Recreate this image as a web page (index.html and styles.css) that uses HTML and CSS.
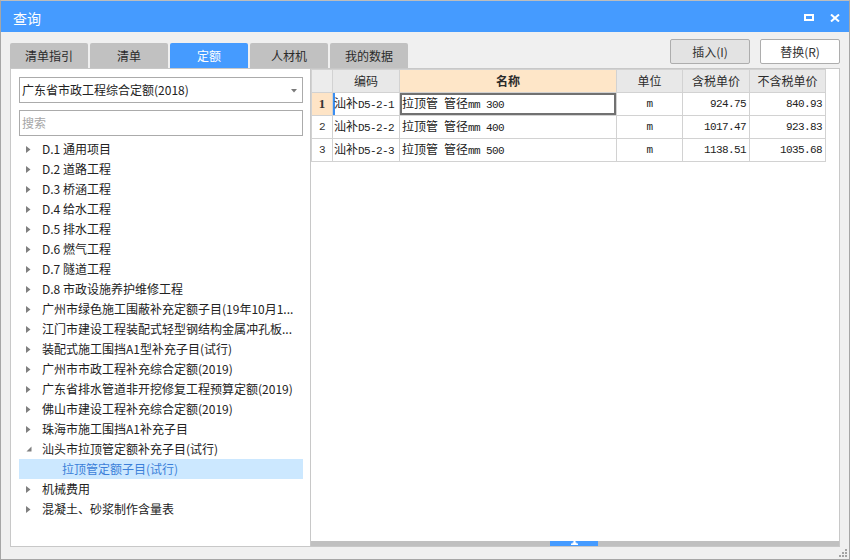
FILE: index.html
```html
<!DOCTYPE html>
<html lang="zh-CN">
<head>
<meta charset="utf-8">
<title>查询</title>
<link rel="stylesheet" href="styles.css">
</head>
<body>
<div class="window">
  <div class="titlebar">
    <span class="title">查询</span>
    <div class="wctl">
      <span class="maxbox"></span>
      <svg class="close" width="10" height="8" viewBox="0 0 10 8"><path d="M1 0.5 L9 7.5 M9 0.5 L1 7.5" stroke="#fff" stroke-width="2" fill="none"/></svg>
    </div>
  </div>
  <div class="body">
    <div class="toprow">
      <div class="tabs">
        <div class="tab">清单指引</div>
        <div class="tab">清单</div>
        <div class="tab active">定额</div>
        <div class="tab">人材机</div>
        <div class="tab">我的数据</div>
      </div>
      <div class="buttons">
        <div class="btn gray">插入(I)</div>
        <div class="btn">替换(R)</div>
      </div>
    </div>
    <div class="main">
      <div class="left">
        <div class="select"><span class="seltext">广东省市政工程综合定额(2018)</span><svg class="caret" width="6" height="4" viewBox="0 0 6 4"><path d="M0 0 L6 0 L3 3.5 Z" fill="#7a7a7a"/></svg></div>
        <div class="search">搜索</div>
        <ul class="tree">
          <li><span class="arr"><svg width="5" height="7" viewBox="0 0 5 7"><path d="M0 0 L4.5 3.5 L0 7 Z" fill="#7f7f7f"/></svg></span><span class="label">D.1 通用项目</span></li>
          <li><span class="arr"><svg width="5" height="7" viewBox="0 0 5 7"><path d="M0 0 L4.5 3.5 L0 7 Z" fill="#7f7f7f"/></svg></span><span class="label">D.2 道路工程</span></li>
          <li><span class="arr"><svg width="5" height="7" viewBox="0 0 5 7"><path d="M0 0 L4.5 3.5 L0 7 Z" fill="#7f7f7f"/></svg></span><span class="label">D.3 桥涵工程</span></li>
          <li><span class="arr"><svg width="5" height="7" viewBox="0 0 5 7"><path d="M0 0 L4.5 3.5 L0 7 Z" fill="#7f7f7f"/></svg></span><span class="label">D.4 给水工程</span></li>
          <li><span class="arr"><svg width="5" height="7" viewBox="0 0 5 7"><path d="M0 0 L4.5 3.5 L0 7 Z" fill="#7f7f7f"/></svg></span><span class="label">D.5 排水工程</span></li>
          <li><span class="arr"><svg width="5" height="7" viewBox="0 0 5 7"><path d="M0 0 L4.5 3.5 L0 7 Z" fill="#7f7f7f"/></svg></span><span class="label">D.6 燃气工程</span></li>
          <li><span class="arr"><svg width="5" height="7" viewBox="0 0 5 7"><path d="M0 0 L4.5 3.5 L0 7 Z" fill="#7f7f7f"/></svg></span><span class="label">D.7 隧道工程</span></li>
          <li><span class="arr"><svg width="5" height="7" viewBox="0 0 5 7"><path d="M0 0 L4.5 3.5 L0 7 Z" fill="#7f7f7f"/></svg></span><span class="label">D.8 市政设施养护维修工程</span></li>
          <li><span class="arr"><svg width="5" height="7" viewBox="0 0 5 7"><path d="M0 0 L4.5 3.5 L0 7 Z" fill="#7f7f7f"/></svg></span><span class="label">广州市绿色施工围蔽补充定额子目(19年10月1...</span></li>
          <li><span class="arr"><svg width="5" height="7" viewBox="0 0 5 7"><path d="M0 0 L4.5 3.5 L0 7 Z" fill="#7f7f7f"/></svg></span><span class="label">江门市建设工程装配式轻型钢结构金属冲孔板...</span></li>
          <li><span class="arr"><svg width="5" height="7" viewBox="0 0 5 7"><path d="M0 0 L4.5 3.5 L0 7 Z" fill="#7f7f7f"/></svg></span><span class="label">装配式施工围挡A1型补充子目(试行)</span></li>
          <li><span class="arr"><svg width="5" height="7" viewBox="0 0 5 7"><path d="M0 0 L4.5 3.5 L0 7 Z" fill="#7f7f7f"/></svg></span><span class="label">广州市市政工程补充综合定额(2019)</span></li>
          <li><span class="arr"><svg width="5" height="7" viewBox="0 0 5 7"><path d="M0 0 L4.5 3.5 L0 7 Z" fill="#7f7f7f"/></svg></span><span class="label">广东省排水管道非开挖修复工程预算定额(2019)</span></li>
          <li><span class="arr"><svg width="5" height="7" viewBox="0 0 5 7"><path d="M0 0 L4.5 3.5 L0 7 Z" fill="#7f7f7f"/></svg></span><span class="label">佛山市建设工程补充综合定额(2019)</span></li>
          <li><span class="arr"><svg width="5" height="7" viewBox="0 0 5 7"><path d="M0 0 L4.5 3.5 L0 7 Z" fill="#7f7f7f"/></svg></span><span class="label">珠海市施工围挡A1补充子目</span></li>
          <li><span class="arr"><svg width="6" height="6" viewBox="0 0 6 6"><path d="M5.5 0.5 L5.5 5.5 L0.5 5.5 Z" fill="#7f7f7f"/></svg></span><span class="label">汕头市拉顶管定额补充子目(试行)</span></li>
          <li class="child selected"><span class="label">拉顶管定额子目(试行)</span></li>
          <li><span class="arr"><svg width="5" height="7" viewBox="0 0 5 7"><path d="M0 0 L4.5 3.5 L0 7 Z" fill="#7f7f7f"/></svg></span><span class="label">机械费用</span></li>
          <li><span class="arr"><svg width="5" height="7" viewBox="0 0 5 7"><path d="M0 0 L4.5 3.5 L0 7 Z" fill="#7f7f7f"/></svg></span><span class="label">混凝土、砂浆制作含量表</span></li>
        </ul>
      </div>
      <div class="right">
        <div class="gridwrap">
          <table class="grid">
            <colgroup>
              <col class="c0"><col class="c1"><col class="c2"><col class="c3"><col class="c4"><col class="c5">
            </colgroup>
            <thead>
              <tr><th class="corner"></th><th>编码</th><th class="hl">名称</th><th>单位</th><th>含税单价</th><th>不含税单价</th></tr>
            </thead>
            <tbody>
              <tr class="cur"><td class="num curnum">1</td><td class="code curcode">汕补<span class="m">D5-2-1</span></td><td class="name focus">拉顶管<span class="m"> </span>管径<span class="m">mm 300</span></td><td class="unit m">m</td><td class="price m">924.75</td><td class="price m">840.93</td></tr>
              <tr><td class="num m">2</td><td class="code">汕补<span class="m">D5-2-2</span></td><td class="name">拉顶管<span class="m"> </span>管径<span class="m">mm 400</span></td><td class="unit m">m</td><td class="price m">1017.47</td><td class="price m">923.83</td></tr>
              <tr><td class="num m">3</td><td class="code">汕补<span class="m">D5-2-3</span></td><td class="name">拉顶管<span class="m"> </span>管径<span class="m">mm 500</span></td><td class="unit m">m</td><td class="price m">1138.51</td><td class="price m">1035.68</td></tr>
            </tbody>
          </table>
        </div>
        <div class="hscroll"><div class="thumb"><svg width="7" height="4" viewBox="0 0 7 4"><path d="M2.5 0 L4.5 0 L4.5 1.5 L5.5 1.5 L5.5 2.5 L7 2.5 L7 4 L0 4 L0 2.5 L1.5 2.5 L1.5 1.5 L2.5 1.5 Z" fill="#fff"/></svg></div></div>
      </div>
    </div>
    <div class="status">
      <svg class="grip" width="10" height="10" viewBox="0 0 10 10">
        <rect x="7" y="0" width="2" height="2" fill="#a4a4a4"/>
        <rect x="4" y="3" width="2" height="2" fill="#a4a4a4"/>
        <rect x="7" y="3" width="2" height="2" fill="#a4a4a4"/>
        <rect x="1" y="6" width="2" height="2" fill="#a4a4a4"/>
        <rect x="4" y="6" width="2" height="2" fill="#a4a4a4"/>
        <rect x="7" y="6" width="2" height="2" fill="#a4a4a4"/>
      </svg>
    </div>
  </div>
</div>
</body>
</html>
```
FILE: styles.css
```css
* { box-sizing: border-box; }
html, body { margin: 0; padding: 0; }
body {
  font-family: "Noto Sans CJK SC", "Microsoft YaHei", sans-serif;
  font-size: 12px;
  color: #222;
  background: #fff;
}
.window {
  width: 850px;
  height: 560px;
  border: 1px solid #a6a6a6;
  border-top-color: #bdbdbd;
  background: #f0f0f0;
  display: flex;
  flex-direction: column;
}
.titlebar {
  height: 31px;
  flex: none;
  background: #459bff;
  color: #fff;
  display: flex;
  align-items: center;
  padding: 2px 9px 0 12px;
}
.title { flex: 1; font-size: 14px; line-height: 16px; }
.wctl { display: flex; align-items: center; gap: 16px; }
.maxbox {
  display: block;
  width: 10px;
  height: 7px;
  border: 2px solid #fff;
  border-top-width: 2.5px;
}
.close { display: block; }

.body {
  flex: 1;
  display: flex;
  flex-direction: column;
  padding: 7px 9px 0 9px;
}
.toprow {
  height: 29px;
  flex: none;
  display: flex;
  justify-content: space-between;
}
.tabs { display: flex; gap: 2px; align-self: flex-end; }
.tab {
  width: 78px;
  height: 25px;
  background: #c1c1c1;
  border-radius: 2px 2px 0 0;
  display: flex;
  align-items: center;
  justify-content: center;
  color: #2b2b2b;
  line-height: 14px;
}
.tab.active { background: #459bff; color: #fff; }
.buttons { display: flex; gap: 10px; }
.btn {
  width: 80px;
  height: 25px;
  border: 1px solid #adadad;
  border-radius: 2px;
  background: #fff;
  display: flex;
  align-items: center;
  justify-content: center;
  color: #333;
  line-height: 14px;
}
.btn.gray { background: #e3e3e3; }

.main { height: 479px; flex: none; display: flex; }
.left {
  width: 301px;
  flex: none;
  background: #fff;
  border: 1px solid #c8c8c8;
  padding: 8px 7px 0 8px;
  display: flex;
  flex-direction: column;
}
.select {
  height: 26px;
  flex: none;
  border: 1px solid #ababab;
  display: flex;
  align-items: center;
  padding: 0 5px 0 2px;
}
.seltext { flex: 1; line-height: 14px; color: #222; }
.caret { display: block; margin-top: 1px; }
.search {
  height: 26px;
  flex: none;
  margin-top: 7px;
  border: 1px solid #ababab;
  display: flex;
  align-items: center;
  padding-left: 2px;
  color: #a6a6a6;
  line-height: 14px;
}
.tree { list-style: none; margin: 3px 0 0; padding: 0; }
.tree li { height: 20px; display: flex; align-items: center; }
.tree .arr { width: 23px; flex: none; padding-left: 7px; display: flex; align-items: center; }
.tree .arr svg { display: block; }
.tree .label {
  flex: 1;
  min-width: 0;
  white-space: nowrap;
  padding-right: 4px;
  line-height: 20px;
  height: 20px;
  color: #222;
}
.tree li.child { padding-left: 43px; }
.tree li.selected { background: #cce8ff; }
.tree li.selected .label { color: #3b7fd9; }

.right {
  flex: 1;
  background: #fff;
  border-top: 1px solid #c8c8c8;
  border-right: 1px solid #c8c8c8;
  border-bottom: 1px solid #c8c8c8;
  display: flex;
  flex-direction: column;
}
.gridwrap { flex: 1; }
.grid {
  border-collapse: collapse;
  table-layout: fixed;
  width: 514px;
}
.c0 { width: 21px; }
.c1 { width: 67px; }
.c2 { width: 217px; }
.c3 { width: 66px; }
.c4 { width: 67px; }
.c5 { width: 76px; }
.grid th, .grid td {
  border: 1px solid #d2d2d2;
  height: 23px;
  padding: 0;
  white-space: nowrap;
  line-height: 16px;
}
.grid th {
  background: #e8e8e8;
  font-weight: normal;
  color: #2b2b2b;
  text-align: center;
}
.grid th.corner { background: #ececec; }
.grid th.hl { background: #fee6c8; font-weight: bold; }
.m {
  font-family: "Liberation Mono", monospace;
  font-size: 11px;
  letter-spacing: -0.6px;
}
.grid td.num { text-align: center; color: #333; }
.grid td.curnum {
  background: #fee4c6;
  font-family: "Liberation Serif", serif;
  font-weight: bold;
  font-size: 13px;
}
.grid td.code { padding-left: 1px; }
.grid td.curcode { box-shadow: inset 2px 0 0 #3a8ef2; }
.grid td.name { padding-left: 2px; }
.grid td.focus { box-shadow: inset 0 0 0 2px #717171; }
.grid td.unit { text-align: center; }
.grid td.price { text-align: right; padding-right: 3px; }

.hscroll {
  height: 5px;
  flex: none;
  background: #c0c0c0;
  display: flex;
}
.thumb {
  margin-left: 239px;
  width: 48px;
  height: 5px;
  background: #459bff;
  display: flex;
  align-items: flex-start;
  justify-content: center;
}
.thumb svg { display: block; }

.status {
  flex: 1;
  display: flex;
  justify-content: flex-end;
  align-items: flex-end;
  margin-right: -8px;
}
.grip { display: block; }
```
